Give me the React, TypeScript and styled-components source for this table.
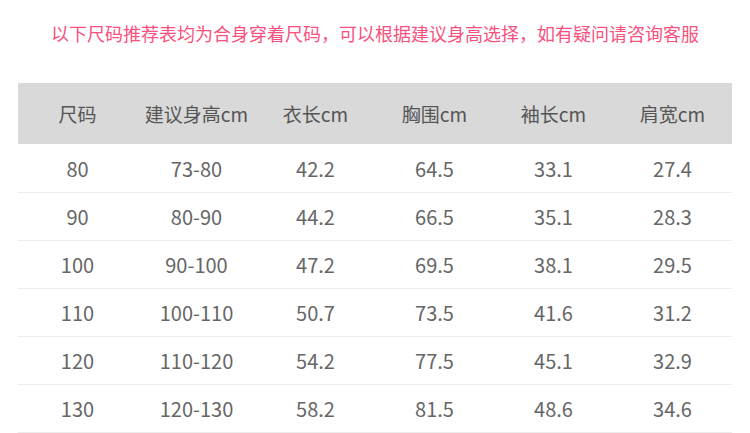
import styled, { createGlobalStyle } from 'styled-components';

const GlobalStyle = createGlobalStyle`
  body {
    margin: 0;
    background: #fff;
    font-family: 'Noto Sans CJK SC', 'Noto Sans', sans-serif;
  }
`;

const Page = styled.div`
  width: 750px;
  height: 433px;
  overflow: hidden;
  padding: 0 18px;
  box-sizing: border-box;
`;

const Title = styled.p`
  margin: 0;
  padding-top: 20px;
  height: 83px;
  box-sizing: border-box;
  text-align: center;
  font-size: 18px;
  line-height: 26px;
  color: #f8517e;
`;

const Table = styled.div`
  width: 714px;
`;

const Body = styled.div`
  padding-top: 1px;
`;

const Row = styled.div<{ $head?: boolean }>`
  display: grid;
  grid-template-columns: repeat(6, 1fr);
  align-items: center;
  height: ${(p) => (p.$head ? '61px' : '48px')};
  box-sizing: border-box;
  background: ${(p) => (p.$head ? '#d9d9d9' : 'transparent')};
  border-bottom: ${(p) => (p.$head ? 'none' : '1px solid #ececec')};
`;

const Cell = styled.span<{ $head?: boolean }>`
  text-align: center;
  font-size: ${(p) => (p.$head ? '19px' : '20px')};
  color: ${(p) => (p.$head ? '#555' : '#666')};
`;

const head = ['尺码', '建议身高cm', '衣长cm', '胸围cm', '袖长cm', '肩宽cm'];

const rows = [
  ['80', '73-80', '42.2', '64.5', '33.1', '27.4'],
  ['90', '80-90', '44.2', '66.5', '35.1', '28.3'],
  ['100', '90-100', '47.2', '69.5', '38.1', '29.5'],
  ['110', '100-110', '50.7', '73.5', '41.6', '31.2'],
  ['120', '110-120', '54.2', '77.5', '45.1', '32.9'],
  ['130', '120-130', '58.2', '81.5', '48.6', '34.6'],
];

export default function App() {
  return (
    <>
      <GlobalStyle />
      <Page>
        <Title>以下尺码推荐表均为合身穿着尺码，可以根据建议身高选择，如有疑问请咨询客服</Title>
        <Table>
          <Row $head>
            {head.map((h) => (
              <Cell $head key={h}>
                {h}
              </Cell>
            ))}
          </Row>
          <Body>
            {rows.map((r) => (
              <Row key={r[0]}>
                {r.map((c, i) => (
                  <Cell key={i}>{c}</Cell>
                ))}
              </Row>
            ))}
          </Body>
        </Table>
      </Page>
    </>
  );
}
